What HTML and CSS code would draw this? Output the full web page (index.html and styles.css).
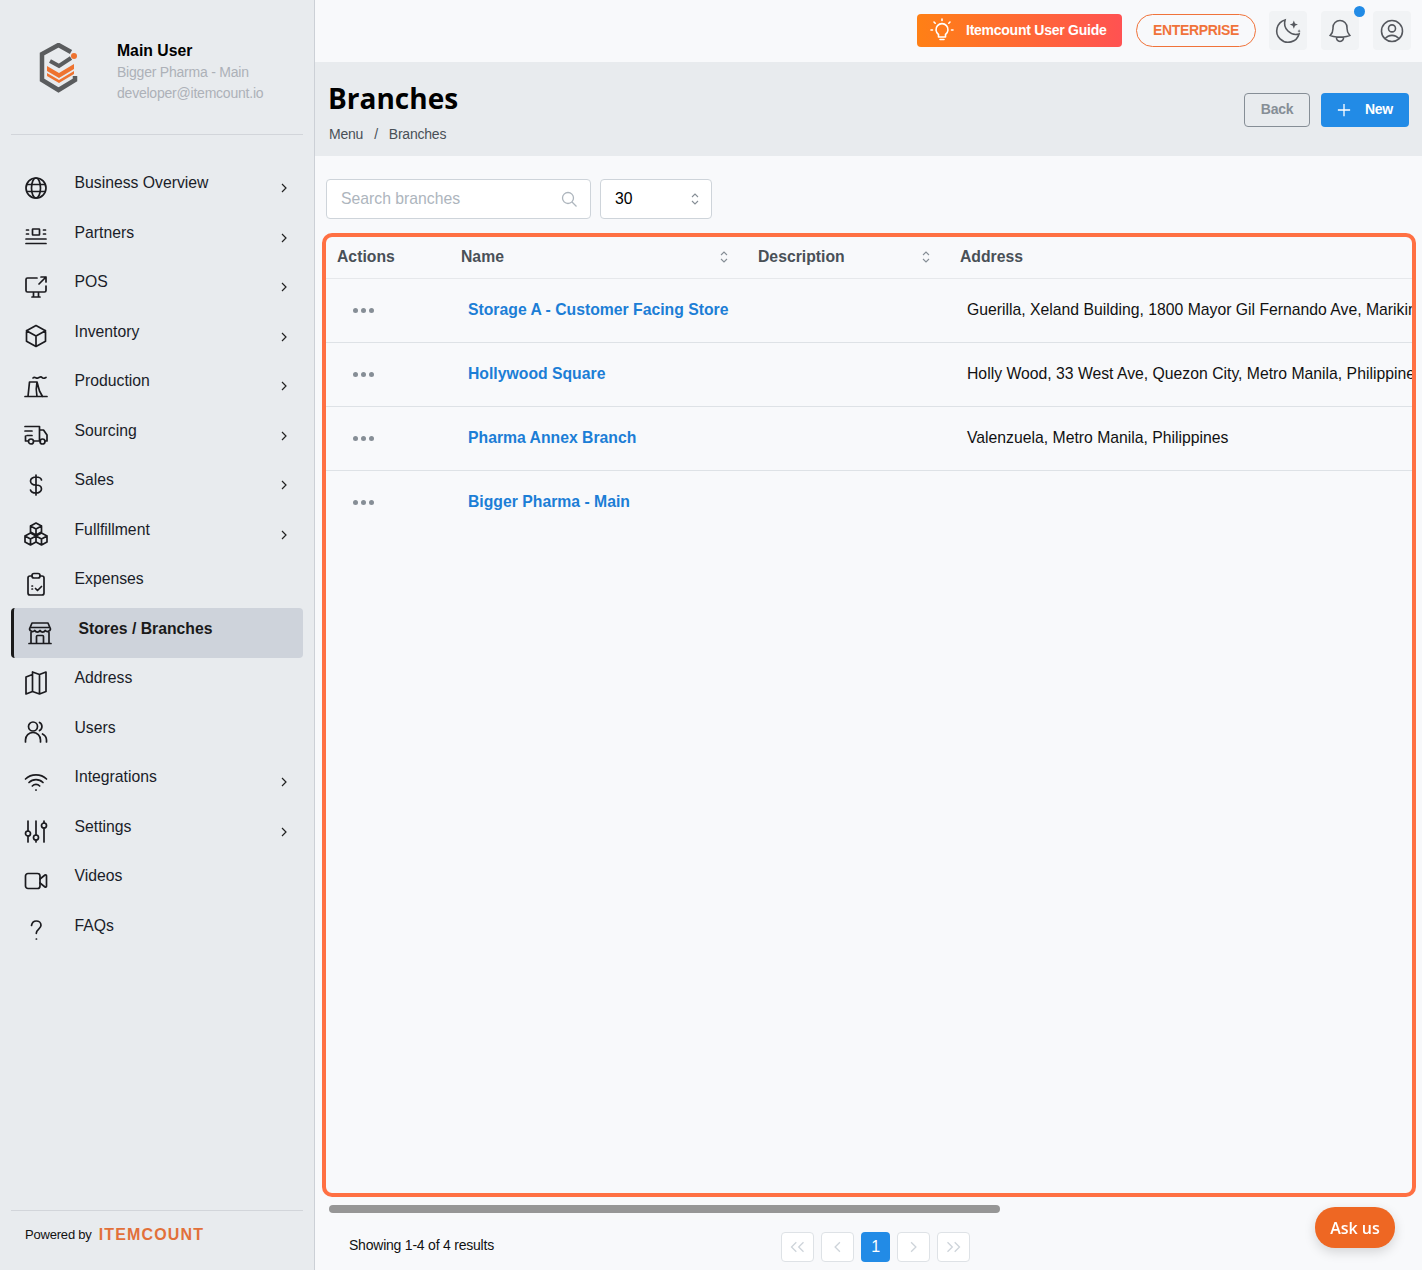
FILE: index.html
```html
<!DOCTYPE html>
<html lang="en">
<head>
  <meta charset="UTF-8">
  <title>Branches</title>
  <link rel="stylesheet" href="styles.css">
</head>
<body>
  <aside class="sidebar">
    <div class="profile">
      <svg class="logo" viewBox="0 0 40 50" fill="none">
        <path d="M32 9 L19.500 2 L3 11 V37 L19.500 47 L36 37 V33" stroke="#5a5c5e" stroke-width="4.500"/>
        <path d="M11 18 L20 23 L32 15" stroke="#5a5c5e" stroke-width="4"/>
        <path d="M8 23 L20 30 L35 21 V26 L20 35 L8 28 Z" fill="#ee7330"/>
        <path d="M8 30 L20 37 L35 28 V31 L20 40 L8 33 Z" fill="#ee7330"/>
        <circle cx="35" cy="13" r="3" fill="#ee7330"/>
      </svg>
      <div class="profile-text">
        <div class="profile-name">Main User</div>
        <div class="profile-sub">Bigger Pharma - Main</div>
        <div class="profile-sub">developer@itemcount.io</div>
      </div>
    </div>

    <nav class="nav">
      <a class="nav-item">
        <svg class="nav-icon" viewBox="0 0 24 24"><circle cx="12" cy="12" r="10"/><ellipse cx="12" cy="12" rx="4.500" ry="10"/><path d="M3 8.500h18M3 15.500h18"/></svg>
        <span class="nav-label">Business Overview</span>
        <svg class="chevron" viewBox="0 0 10 10"><path d="M3 1l4 4-4 4"/></svg>
      </a>
      <a class="nav-item">
        <svg class="nav-icon" viewBox="0 0 24 24"><rect x="8.500" y="4" width="7" height="6" rx=".5"/><path d="M2 14h20M2 18.500h20M2.500 5h2M2.500 9h2M19.500 5h2M19.500 9h2"/></svg>
        <span class="nav-label">Partners</span>
        <svg class="chevron" viewBox="0 0 10 10"><path d="M3 1l4 4-4 4"/></svg>
      </a>
      <a class="nav-item">
        <svg class="nav-icon" viewBox="0 0 24 24"><path d="M13 3H3.500A1.500 1.500 0 0 0 2 4.500v11A1.500 1.500 0 0 0 3.500 17h17a1.500 1.500 0 0 0 1.500-1.500V11M8 22h8M9.500 17v5M14.500 17v5M15 9l7-7M17 2h5v5"/></svg>
        <span class="nav-label">POS</span>
        <svg class="chevron" viewBox="0 0 10 10"><path d="M3 1l4 4-4 4"/></svg>
      </a>
      <a class="nav-item">
        <svg class="nav-icon" viewBox="0 0 24 24"><path d="M12 1.500l9.500 5.200v10.600L12 22.500l-9.500-5.200V6.700zM2.500 6.700L12 12l9.500-5.300M12 12v10.500"/></svg>
        <span class="nav-label">Inventory</span>
        <svg class="chevron" viewBox="0 0 10 10"><path d="M3 1l4 4-4 4"/></svg>
      </a>
      <a class="nav-item">
        <svg class="nav-icon" viewBox="0 0 24 24"><path d="M1 22.500h22M4 22.500L5.500 8H13l2.500 9 3 5.500M13 8c-1 5-1 10 0 14.500M9 4c2-2 3 1 5 0s3-2 4-.5 3 .5 4 0"/></svg>
        <span class="nav-label">Production</span>
        <svg class="chevron" viewBox="0 0 10 10"><path d="M3 1l4 4-4 4"/></svg>
      </a>
      <a class="nav-item">
        <svg class="nav-icon" viewBox="0 0 24 24"><path d="M1 3.500h14.500V18H10M4 18H1.500v-5M15.500 7h4l3.500 5v6h-2M15.500 18h1M1 8h7M3 12.500h5"/><circle cx="7" cy="18.500" r="2.500"/><circle cx="18.500" cy="18.500" r="2.500"/></svg>
        <span class="nav-label">Sourcing</span>
        <svg class="chevron" viewBox="0 0 10 10"><path d="M3 1l4 4-4 4"/></svg>
      </a>
      <a class="nav-item">
        <svg class="nav-icon" viewBox="0 0 24 24"><path d="M12 2v20M17.500 7c-.5-2-3-3-5.500-3S6.500 5.500 6.500 8s2.500 4 5.500 4 5.500 1.500 5.500 4-3 4-5.500 4-5-1-5.500-3"/></svg>
        <span class="nav-label">Sales</span>
        <svg class="chevron" viewBox="0 0 10 10"><path d="M3 1l4 4-4 4"/></svg>
      </a>
      <a class="nav-item">
        <svg class="nav-icon" viewBox="0 0 24 24"><path d="M12 1l5.500 3v6L12 13 6.500 10V4zM6.500 4L12 7l5.500-3M12 7v6M6.500 11L12 14v6l-5.500 3L1 20v-6zM1 14l5.500 3L12 14M6.500 17v6M17.500 11L23 14v6l-5.500 3L12 20v-6zM12 14l5.500 3L23 14M17.500 17v6"/></svg>
        <span class="nav-label">Fullfillment</span>
        <svg class="chevron" viewBox="0 0 10 10"><path d="M3 1l4 4-4 4"/></svg>
      </a>
      <a class="nav-item">
        <svg class="nav-icon" viewBox="0 0 24 24"><path d="M8 4H6a2 2 0 0 0-2 2v15a2 2 0 0 0 2 2h12a2 2 0 0 0 2-2V6a2 2 0 0 0-2-2h-2M8 17h.5M8 14h.5M11.500 16.500l2 2 4-4"/><rect x="8" y="1.500" width="8" height="4.500" rx="2"/></svg>
        <span class="nav-label">Expenses</span>
      </a>
      <a class="nav-item nav-item-active">
        <svg class="nav-icon" viewBox="0 0 24 24"><path d="M1 22.500h22M3 22.500V11.500M21 22.500V11.500M4 2h16l2.500 6a3 3 0 0 1-5.250 1.500 3 3 0 0 1-5.250 0 3 3 0 0 1-5.250 0A3 3 0 0 1 1.500 8zM2 6.500h20M8.500 22.500V15.500a1 1 0 0 1 1-1h5a1 1 0 0 1 1 1v7"/></svg>
        <span class="nav-label">Stores / Branches</span>
      </a>
      <a class="nav-item">
        <svg class="nav-icon" viewBox="0 0 24 24"><path d="M8.500 3.500L2 6v17l6.500-2.500 7 2.500 6.500-2.500V1l-6.500 2.500-7-2.500zM8.500 1.500v19M15.500 3.500v19"/></svg>
        <span class="nav-label">Address</span>
      </a>
      <a class="nav-item">
        <svg class="nav-icon" viewBox="0 0 24 24"><circle cx="9" cy="6.500" r="4.500"/><path d="M1.500 22v-2a7.500 7.500 0 0 1 15 0v2M15.500 2.500a4.500 4.500 0 0 1 0 8M18.500 14a7 7 0 0 1 4 6v2"/></svg>
        <span class="nav-label">Users</span>
      </a>
      <a class="nav-item">
        <svg class="nav-icon" viewBox="0 0 24 24"><path d="M8.300 16a5.200 5.200 0 0 1 7.400 0M5 12.500c3.800-3.800 10.200-3.800 14 0M1.500 9c5.600-5.600 15.400-5.600 21 0M11.800 20h.4"/></svg>
        <span class="nav-label">Integrations</span>
        <svg class="chevron" viewBox="0 0 10 10"><path d="M3 1l4 4-4 4"/></svg>
      </a>
      <a class="nav-item">
        <svg class="nav-icon" viewBox="0 0 24 24"><path d="M4 2v10M4 17v6M12 2v14M12 21v2M20 2v2M20 9v14"/><circle cx="4" cy="14.500" r="2.500"/><circle cx="12" cy="18.500" r="2.500"/><circle cx="20" cy="6.500" r="2.500"/></svg>
        <span class="nav-label">Settings</span>
        <svg class="chevron" viewBox="0 0 10 10"><path d="M3 1l4 4-4 4"/></svg>
      </a>
      <a class="nav-item">
        <svg class="nav-icon" viewBox="0 0 24 24"><rect x="1.500" y="4.500" width="14.500" height="15" rx="2.500"/><path d="M16 10l5-4a1 1 0 0 1 1.500.8v10.400a1 1 0 0 1-1.500.8l-5-4"/></svg>
        <span class="nav-label">Videos</span>
      </a>
      <a class="nav-item">
        <svg class="nav-icon" viewBox="0 0 24 24"><path d="M7.500 7.500C8 4.500 10 3 12.300 3c2.500 0 4.700 1.800 4.700 4.300 0 3.700-4.700 4-4.700 8M12.300 21h.2"/></svg>
        <span class="nav-label">FAQs</span>
      </a>
    </nav>

    <div class="powered">
      <span>Powered by</span>
      <span class="powered-brand">ITEMCOUNT</span>
    </div>
  </aside>

  <main class="main">
    <header class="topbar">
      <a class="guide-btn">
        <svg class="guide-icon" viewBox="0 0 24 24"><path d="M8.500 16.500a6 6 0 1 1 7 0V19h-7zM10 21.500h4M12 1v1.500M4 4l1.200 1.200M20 4l-1.200 1.200M1 12h1.500M21.500 12H23"/></svg>
        <span>Itemcount User Guide</span>
      </a>
      <a class="plan-pill">ENTERPRISE</a>
      <div class="icon-tile">
        <svg viewBox="0 0 24 24"><path d="M21.500 14.500A9.700 9.700 0 0 1 9.500 2.500 9.750 9.750 0 1 0 21.500 14.500z"/><path class="tile-star" d="M17 3l1 2.500 2.500 1-2.500 1-1 2.500-1-2.500-2.500-1 2.500-1zM21.500 10.500l.5 1.200 1 .4-1 .4-.5 1.200-.5-1.200-1-.4 1-.4z"/></svg>
      </div>
      <div class="icon-tile icon-tile-dot">
        <svg viewBox="0 0 24 24"><path d="M14.857 17.082a23.848 23.848 0 0 0 5.454-1.31A8.967 8.967 0 0 1 18 9.750V9A6 6 0 0 0 6 9v.75a8.967 8.967 0 0 1-2.312 6.022c1.733.64 3.560 1.085 5.455 1.310m5.714 0a24.255 24.255 0 0 1-5.714 0m5.714 0a3 3 0 1 1-5.714 0"/></svg>
      </div>
      <div class="icon-tile">
        <svg viewBox="0 0 24 24"><path d="M17.982 18.725A7.488 7.488 0 0 0 12 15.750a7.488 7.488 0 0 0-5.982 2.975m11.963 0a9 9 0 1 0-11.963 0m11.963 0A8.966 8.966 0 0 1 12 21a8.966 8.966 0 0 1-5.982-2.275M15 9.750a3 3 0 1 1-6 0 3 3 0 0 1 6 0Z"/></svg>
      </div>
    </header>

    <section class="page-head">
      <div>
        <h1>Branches</h1>
        <div class="crumbs"><span>Menu</span><span>/</span><span>Branches</span></div>
      </div>
      <div class="page-actions">
        <a class="btn-back">Back</a>
        <a class="btn-new">
          <svg viewBox="0 0 16 16"><path d="M8 1v14M1 8h14"/></svg>
          <span>New</span>
        </a>
      </div>
    </section>

    <section class="content">
      <div class="toolbar">
        <div class="search">
          <span>Search branches</span>
          <svg viewBox="0 0 16 16"><circle cx="7" cy="7" r="5.500"/><path d="M11 11l4.500 4.500"/></svg>
        </div>
        <div class="page-size">
          <span>30</span>
          <svg class="sort-icon" viewBox="0 0 8 14"><path d="M1 5l3-3 3 3M1 9l3 3 3-3"/></svg>
        </div>
      </div>

      <div class="table-frame">
        <table class="branch-table">
          <thead>
            <tr>
              <th class="col-actions">Actions</th>
              <th class="col-name"><div class="th-inner">Name<svg class="sort-icon" viewBox="0 0 8 14"><path d="M1 5l3-3 3 3M1 9l3 3 3-3"/></svg></div></th>
              <th class="col-desc"><div class="th-inner">Description<svg class="sort-icon" viewBox="0 0 8 14"><path d="M1 5l3-3 3 3M1 9l3 3 3-3"/></svg></div></th>
              <th>Address</th>
            </tr>
          </thead>
          <tbody>
            <tr>
              <td class="dots"><i></i><i></i><i></i></td>
              <td class="branch-name">Storage A - Customer Facing Store</td>
              <td></td>
              <td>Guerilla, Xeland Building, 1800 Mayor Gil Fernando Ave, Marikina, Metro Manila, Philippines</td>
            </tr>
            <tr>
              <td class="dots"><i></i><i></i><i></i></td>
              <td class="branch-name">Hollywood Square</td>
              <td></td>
              <td>Holly Wood, 33 West Ave, Quezon City, Metro Manila, Philippines</td>
            </tr>
            <tr>
              <td class="dots"><i></i><i></i><i></i></td>
              <td class="branch-name">Pharma Annex Branch</td>
              <td></td>
              <td>Valenzuela, Metro Manila, Philippines</td>
            </tr>
            <tr>
              <td class="dots"><i></i><i></i><i></i></td>
              <td class="branch-name">Bigger Pharma - Main</td>
              <td></td>
              <td></td>
            </tr>
          </tbody>
        </table>
      </div>

      <div class="scroll-track"><div class="scroll-thumb"></div></div>

      <div class="table-foot">
        <div class="results">Showing 1-4 of 4 results</div>
        <div class="pager">
          <a class="page-btn"><svg viewBox="0 0 14 10"><path d="M6 1L2 5l4 4M12 1L8 5l4 4"/></svg></a>
          <a class="page-btn"><svg viewBox="0 0 14 10"><path d="M9 1L5 5l4 4"/></svg></a>
          <a class="page-btn page-btn-on">1</a>
          <a class="page-btn"><svg viewBox="0 0 14 10"><path d="M5 1l4 4-4 4"/></svg></a>
          <a class="page-btn"><svg viewBox="0 0 14 10"><path d="M2 1l4 4-4 4M8 1l4 4-4 4"/></svg></a>
        </div>
      </div>
    </section>
  </main>

  <a class="ask-us">Ask us</a>
</body>
</html>
```

FILE: styles.css
```css
* {
  box-sizing: border-box;
}
body {
  margin: 0;
  height: 1270px;
  display: flex;
  overflow: hidden;
  background: #f8f9fb;
  font-family: 'Liberation Sans', Arial, sans-serif;
  font-size: 15.75px;
  color: #111;
}

/* sidebar */
.sidebar {
  width: 315px;
  flex-shrink: 0;
  display: flex;
  flex-direction: column;
  padding: 0 11px;
  background: #e8ebee;
  border-right: 1px solid #ccd0d6;
}
.profile {
  height: 135px;
  display: flex;
  align-items: flex-start;
  padding: 40px 0 0 28px;
  border-bottom: 1px solid #d2d5da;
}
.logo {
  width: 40px;
  height: 50px;
  margin-top: 3px;
  flex-shrink: 0;
}
.profile-text {
  margin-left: 38px;
}
.profile-name {
  font-weight: bold;
  line-height: 21px;
  color: #000;
}
.profile-sub {
  margin-top: 1px;
  font-size: 14px;
  letter-spacing: -0.22px;
  line-height: 20px;
  color: #adb1b8;
}
.nav {
  margin-top: 27.4px;
  flex: 1;
}
.nav-item {
  height: 49.53px;
  display: flex;
  align-items: center;
  padding: 0 14px 0 13px;
  border-radius: 4px;
}
.nav-icon {
  width: 24px;
  height: 24px;
  flex-shrink: 0;
  margin-top: 1px;
  fill: none;
  stroke: #1b1b1f;
  stroke-width: 1.700;
  stroke-linecap: round;
  stroke-linejoin: round;
}
.nav-label {
  flex: 1;
  margin: -8px 0 0 26.5px;
  color: #1a1d29;
}
.chevron {
  width: 10px;
  height: 10px;
  margin-top: 2px;
  fill: none;
  stroke: #222;
  stroke-width: 1.200;
}
.nav-item-active {
  background: #ced3db;
  border-left: 3px solid #1a1a1a;
  padding-left: 14px;
}
.nav-item-active .nav-label {
  font-weight: bold;
  color: #1a1a1a;
}
.powered {
  height: 60px;
  display: flex;
  align-items: flex-start;
  gap: 7px;
  padding: 14.500px 0 0 14px;
  border-top: 1px solid #d2d5da;
  font-size: 13px;
  letter-spacing: -0.2px;
  line-height: 18px;
}
.powered-brand {
  font-size: 16px;
  font-weight: bold;
  letter-spacing: 1.15px;
  color: #e2703a;
}

/* main column */
.main {
  flex: 1;
  min-width: 0;
  display: flex;
  flex-direction: column;
}
.topbar {
  height: 62px;
  flex-shrink: 0;
  display: flex;
  align-items: center;
  justify-content: flex-end;
  padding: 0 11px 1px 0;
}
.guide-btn {
  width: 205px;
  height: 33px;
  display: flex;
  align-items: center;
  padding: 0 0 1px 13px;
  border-radius: 4px;
  background: linear-gradient(to right, #ff8015, #ff5252);
  font-size: 14px;
  letter-spacing: -0.25px;
  font-weight: bold;
  color: #fff;
}
.guide-icon {
  width: 24px;
  height: 24px;
  margin-right: 12px;
  fill: none;
  stroke: #fff;
  stroke-width: 1.600;
  stroke-linecap: round;
  stroke-linejoin: round;
}
.plan-pill {
  width: 120px;
  height: 33px;
  margin: 0 13px 0 14px;
  display: flex;
  align-items: center;
  justify-content: center;
  padding-bottom: 2px;
  border: 1px solid #f0733a;
  border-radius: 17px;
  font-size: 14px;
  letter-spacing: -0.35px;
  font-weight: bold;
  color: #f0733a;
}
.icon-tile {
  width: 38px;
  height: 39px;
  margin-left: 14px;
  display: flex;
  align-items: center;
  justify-content: center;
  position: relative;
  border-radius: 4px;
  background: #f1f3f5;
}
.icon-tile:first-of-type {
  margin-left: 0;
}
.icon-tile svg {
  width: 28px;
  height: 28px;
  fill: none;
  stroke: #55585e;
  stroke-width: 1.350;
}
.icon-tile .tile-star {
  fill: #55585e;
  stroke: none;
}
.icon-tile-dot::after {
  content: "";
  position: absolute;
  top: -5.500px;
  right: -5.500px;
  width: 11px;
  height: 11px;
  border-radius: 50%;
  background: #228be6;
}
.page-head {
  height: 94px;
  flex-shrink: 0;
  display: flex;
  justify-content: space-between;
  padding: 0 13px 0 14px;
  background: #e8ebee;
}
h1 {
  margin: 17px 0 0 -1px;
  font-family: 'Open Sans', 'Noto Sans', sans-serif;
  font-size: 28px;
  line-height: 38px;
  font-weight: 700;
  color: #000;
}
.crumbs {
  margin-top: 9px;
  display: flex;
  gap: 11px;
  font-size: 14px;
  letter-spacing: -0.22px;
  line-height: 16px;
  color: #495057;
}
.page-actions {
  display: flex;
  gap: 11px;
  padding-top: 31px;
}
.btn-back,
.btn-new {
  height: 34px;
  display: flex;
  align-items: center;
  justify-content: center;
  border-radius: 4px;
  font-size: 14px;
  letter-spacing: -0.25px;
  font-weight: bold;
}
.btn-back {
  width: 66px;
  padding-bottom: 3px;
  border: 1px solid #868e96;
  color: #868e96;
}
.btn-new {
  width: 88px;
  gap: 14px;
  padding-bottom: 1px;
  background: #228be6;
  color: #fff;
}
.btn-new span {
  margin-top: -2px;
}
.btn-new svg {
  width: 14px;
  height: 14px;
  fill: none;
  stroke: #fff;
  stroke-width: 1.500;
}

/* content */
.content {
  flex: 1;
  min-height: 0;
  display: flex;
  flex-direction: column;
  padding: 23px 6px 8px 7px;
}
.toolbar {
  display: flex;
  gap: 9px;
  padding-left: 4px;
  margin-bottom: 14px;
}
.search,
.page-size {
  height: 40px;
  display: flex;
  align-items: center;
  justify-content: space-between;
  border: 1px solid #ced4da;
  border-radius: 4px;
  background: #fff;
}
.search {
  width: 265px;
  padding: 0 13px 0 14px;
  color: #adb5bd;
}
.search svg {
  width: 16px;
  height: 16px;
  fill: none;
  stroke: #adb5bd;
  stroke-width: 1.300;
}
.page-size {
  width: 112px;
  padding: 0 12px 0 14px;
  color: #000;
}
.sort-icon {
  width: 8px;
  height: 14px;
  fill: none;
  stroke: #868e96;
  stroke-width: 1.100;
}
.table-frame {
  flex: 1;
  min-height: 0;
  overflow: hidden;
  border: 4px solid #ff7043;
  border-radius: 10px;
}
.branch-table {
  width: 1700px;
  table-layout: fixed;
  border-collapse: collapse;
}
.branch-table th {
  height: 41px;
  padding: 0 12px 1px;
  text-align: left;
  font-weight: bold;
  color: #495057;
  border-bottom: 1px solid #e6e8eb;
}
.branch-table th.col-actions {
  padding-left: 11px;
}
.branch-table td {
  height: 64px;
  padding: 0 19px;
  white-space: nowrap;
  color: #111;
  border-bottom: 1px solid #dee2e6;
}
.branch-table tr:last-child td {
  border-bottom-color: transparent;
}
.col-actions {
  width: 123px;
}
.col-name {
  width: 297px;
}
.col-desc {
  width: 202px;
}
.th-inner {
  display: flex;
  align-items: center;
  justify-content: space-between;
  padding-right: 6px;
}
.branch-table .branch-name {
  font-weight: bold;
  color: #1c7ed6;
}
.branch-table .dots {
  padding-left: 27px;
}
.dots i {
  display: inline-block;
  vertical-align: middle;
  width: 5px;
  height: 5px;
  margin-right: 3px;
  border-radius: 50%;
  background: #868e96;
}
.scroll-track {
  height: 8px;
  margin: 8px 0 0 7px;
  flex-shrink: 0;
}
.scroll-thumb {
  width: 671px;
  height: 8px;
  border-radius: 4px;
  background: #969696;
}
.table-foot {
  height: 30px;
  margin-top: 19px;
  flex-shrink: 0;
  display: flex;
  align-items: center;
  font-size: 14px;
  letter-spacing: -0.22px;
  padding-left: 27px;
}
.results {
  width: 432px;
  margin-top: -5px;
}
.pager {
  display: flex;
  gap: 7px;
}
.page-btn {
  width: 33px;
  height: 30px;
  display: flex;
  align-items: center;
  justify-content: center;
  border: 1px solid #dee2e6;
  border-radius: 4px;
  background: #fff;
}
.page-btn svg {
  width: 17px;
  height: 12px;
  fill: none;
  stroke: #ced4da;
  stroke-width: 1.100;
}
.page-btn-on {
  width: 29px;
  border: 0;
  background: #228be6;
  font-size: 16px;
  color: #fff;
}
.ask-us {
  position: fixed;
  left: 1315px;
  top: 1207px;
  width: 80px;
  height: 41px;
  display: flex;
  align-items: center;
  justify-content: center;
  border-radius: 20px;
  background: #ee6723;
  box-shadow: 0 4px 12px rgba(0, 0, 0, 0.15);
  font-family: 'Open Sans', 'Noto Sans', sans-serif;
  font-size: 16px;
  font-weight: 600;
  color: #fff;
}
```
